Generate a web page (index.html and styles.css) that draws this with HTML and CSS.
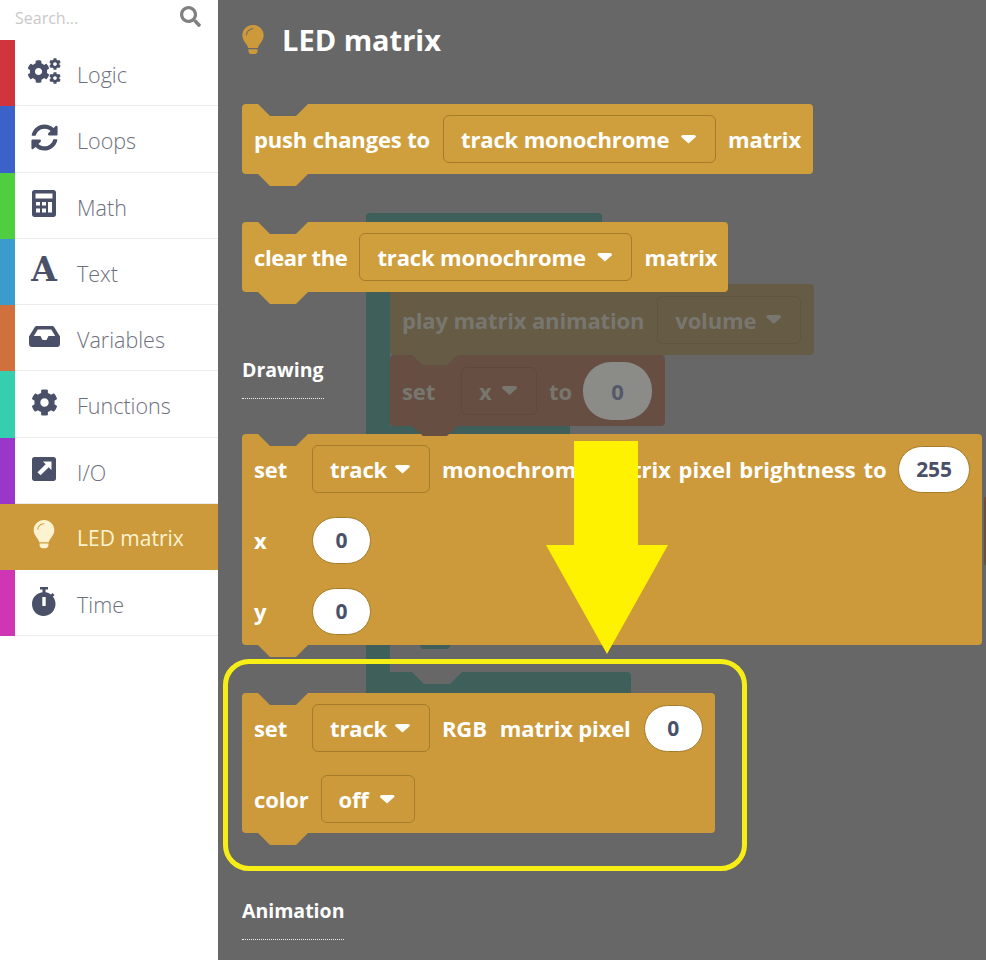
FILE: index.html
```html
<!DOCTYPE html>
<html lang="en">
<head>
  <meta charset="UTF-8">
  <title>LED matrix blocks</title>
  <link rel="stylesheet" href="styles.css">
</head>
<body>

  <svg class="defs" width="0" height="0">
    <symbol id="cog" viewBox="0 0 512 512"><path d="M487.4 315.7l-42.6-24.6c4.3-23.2 4.3-47 0-70.2l42.6-24.6c4.9-2.8 7.1-8.6 5.5-14-11.1-35.6-30-67.8-54.7-94.6-3.8-4.1-10-5.1-14.8-2.3L380.8 110c-17.9-15.4-38.5-27.3-60.8-35.1V25.8c0-5.6-3.9-10.5-9.4-11.7-36.7-8.2-74.3-7.8-109.2 0-5.5 1.2-9.4 6.1-9.4 11.7V75c-22.2 7.9-42.8 19.8-60.8 35.1L88.7 85.5c-4.9-2.8-11-1.9-14.8 2.3-24.7 26.7-43.6 58.9-54.7 94.6-1.7 5.4.6 11.2 5.5 14L67.3 221c-4.3 23.2-4.3 47 0 70.2l-42.6 24.6c-4.9 2.8-7.1 8.6-5.5 14 11.1 35.6 30 67.8 54.7 94.6 3.8 4.1 10 5.1 14.8 2.3l42.6-24.6c17.9 15.4 38.5 27.3 60.8 35.1v49.2c0 5.6 3.9 10.5 9.4 11.7 36.7 8.2 74.3 7.8 109.2 0 5.5-1.2 9.4-6.1 9.4-11.7v-49.2c22.2-7.9 42.8-19.8 60.8-35.1l42.6 24.6c4.9 2.8 11 1.9 14.8-2.3 24.7-26.7 43.6-58.9 54.7-94.6 1.5-5.5-.7-11.3-5.6-14.1zM256 336c-44.1 0-80-35.9-80-80s35.9-80 80-80 80 35.9 80 80-35.9 80-80 80z"/></symbol>
    <symbol id="bulb" viewBox="0 0 22 32"><path fill-rule="evenodd" d="M11 0C5 0 0 4.700 0 10.700c0 2.900 1.100 5.300 2.800 7.300 1.200 1.400 2.700 3.700 3.200 5.700h10c.5-2 2-4.300 3.200-5.700 1.700-2 2.800-4.400 2.800-7.300C22 4.700 17 0 11 0zm0 3.400c-3.900 0-7 3.100-7 6.900 0 .6.900.6.900 0 0-3.300 2.800-5.900 6.100-5.900.7 0 .7-1 0-1z"/><path d="M6.300 25h9.400v2.300c0 .5-.2.900-.5 1.200l-1 1.100c-.3.300-.7.400-1 .4H8.800c-.4 0-.7-.1-1-.4l-1-1.100c-.3-.3-.5-.7-.5-1.200z"/></symbol>
  </svg>

  <div class="app">
    <aside class="sidebar">
      <div class="search">
        <span>Search...</span>
        <svg class="search-icon" viewBox="0 0 512 512"><path d="M505 442.700L405.300 343c-4.500-4.500-10.600-7-17-7H372c27.600-35.300 44-79.700 44-128C416 93.100 322.900 0 208 0S0 93.100 0 208s93.100 208 208 208c48.300 0 92.700-16.400 128-44v16.300c0 6.400 2.500 12.500 7 17l99.700 99.700c9.400 9.400 24.600 9.400 33.900 0l28.300-28.300c9.400-9.400 9.400-24.600.1-34zM208 336c-70.700 0-128-57.200-128-128 0-70.700 57.200-128 128-128 70.700 0 128 57.200 128 128 0 70.700-57.200 128-128 128z"/></svg>
      </div>

      <div class="cat logic">
        <div class="cat-icon">
          <svg width="34" height="26" viewBox="0 0 34 26">
            <use href="#cog" x="0" y="2" width="23" height="23"/>
            <use href="#cog" x="22" y="0" width="12" height="12"/>
            <use href="#cog" x="22" y="14" width="12" height="12"/>
          </svg>
        </div>
        <span>Logic</span>
      </div>
      <div class="cat loops">
        <div class="cat-icon">
          <svg width="27" height="27" viewBox="0 0 512 512"><path d="M370.720 133.280C339.458 104.008 298.888 87.962 255.848 88c-77.458.068-144.328 53.178-162.791 126.850-1.344 5.363-6.122 9.150-11.651 9.150H24.103c-7.498 0-13.194-6.807-11.807-14.176C33.933 94.924 134.813 8 256 8c66.448 0 126.791 26.136 171.315 68.685L463.030 40.970C478.149 25.851 504 36.559 504 57.941V192c0 13.255-10.745 24-24 24H345.941c-21.382 0-32.090-25.851-16.971-40.971l41.750-41.749zM32 296h134.059c21.382 0 32.090 25.851 16.971 40.971l-41.750 41.750c31.262 29.273 71.835 45.319 114.876 45.280 77.418-.07 144.315-53.144 162.787-126.849 1.344-5.363 6.122-9.150 11.651-9.150h57.304c7.498 0 13.194 6.807 11.807 14.176C478.067 417.076 377.187 504 256 504c-66.448 0-126.791-26.136-171.315-68.685L48.970 471.030C33.851 486.149 8 475.441 8 454.059V320c0-13.255 10.745-24 24-24z"/></svg>
        </div>
        <span>Loops</span>
      </div>
      <div class="cat math">
        <div class="cat-icon">
          <svg width="24" height="27" viewBox="0 0 24 27"><path fill-rule="evenodd" d="M2.500 0h19C23 0 24 1 24 2.500v22c0 1.500-1 2.500-2.500 2.500h-19C1 27 0 26 0 24.500v-22C0 1 1 0 2.500 0zM3.500 3.500v5h17v-5zM4 12v3.500h4V12zm6 0v3.500h4V12zm6 0v10.500h4V12zM4 18.500V22.500h4v-4zm6 0V22.500h4v-4z"/></svg>
        </div>
        <span>Math</span>
      </div>
      <div class="cat text">
        <div class="cat-icon"><b class="letter">A</b></div>
        <span>Text</span>
      </div>
      <div class="cat variables">
        <div class="cat-icon">
          <svg width="31" height="21" viewBox="0 0 31 21"><path fill-rule="evenodd" d="M8 0h15c1 0 1.800.5 2.300 1.300L31 10.500V18c0 1.700-1.300 3-3 3H3c-1.700 0-3-1.300-3-3v-7.500L5.700 1.300C6.200.5 7 0 8 0zm.8 3.500L4.800 10h6.700l2 4h4l2-4h6.700l-4-6.500z"/></svg>
        </div>
        <span>Variables</span>
      </div>
      <div class="cat functions">
        <div class="cat-icon"><svg width="27" height="27"><use href="#cog" width="27" height="27"/></svg></div>
        <span>Functions</span>
      </div>
      <div class="cat io">
        <div class="cat-icon">
          <svg width="24" height="24" viewBox="0 0 24 24"><path fill-rule="evenodd" d="M2.500 0h19C23 0 24 1 24 2.500v19c0 1.500-1 2.500-2.500 2.500h-19C1 24 0 23 0 21.500v-19C0 1 1 0 2.500 0zM11 4.500l2.700 2.700-8.200 8 3.100 3.100 8.100-8.100 2.800 2.800V4.500z"/></svg>
        </div>
        <span>I/O</span>
      </div>
      <div class="cat led active">
        <div class="cat-icon"><svg width="22" height="30"><use href="#bulb" width="22" height="30"/></svg></div>
        <span>LED matrix</span>
      </div>
      <div class="cat time">
        <div class="cat-icon">
          <svg width="24" height="29" viewBox="0 0 24 29"><path fill-rule="evenodd" d="M8 0h8v2.500h-2.500v2.700c2.100.3 4 1.100 5.500 2.400l1.500-1.500 2 2-1.600 1.600c1.700 2 2.600 4.500 2.600 7.300 0 6.500-5.300 12-12 12S0 23.500 0 17 4.700 5.800 10.500 5.200V2.500H8zM10.300 10v9h3.400v-9z"/></svg>
        </div>
        <span>Time</span>
      </div>
    </aside>

    <main class="flyout">
      <!-- workspace blocks showing through behind the flyout -->
      <div class="ghosts">
        <div class="ghost teal-top"></div>
        <div class="ghost teal-stem"></div>
        <div class="ghost teal-tab top-tab"></div>
        <div class="ghost teal-tab low-tab"></div>
        <div class="ghost teal-mid"></div>
        <div class="ghost teal-foot"><i class="foot-notch"></i></div>
        <div class="ghost play-block">
          <span class="ghost-label">play matrix animation</span>
          <span class="ghost-drop">volume <i class="caret"></i></span>
        </div>
        <div class="ghost set-block">
          <span class="ghost-label">set</span>
          <span class="ghost-drop small">x <i class="caret"></i></span>
          <span class="ghost-label">to</span>
          <span class="ghost-pill">0</span>
        </div>
        <div class="ghost far-right"></div>
      </div>

      <div class="content">
        <h1 class="title">
          <svg width="22" height="31"><use href="#bulb" width="22" height="31"/></svg>
          LED matrix
        </h1>

        <div class="block b-push">
          <div class="row">
            <span class="push-lbl">push changes to</span>
            <span class="drop track-mono">track monochrome <i class="caret"></i></span>
            <span>matrix</span>
          </div>
        </div>

        <div class="block b-clear">
          <div class="row">
            <span class="clear-lbl">clear the</span>
            <span class="drop track-mono">track monochrome <i class="caret"></i></span>
            <span>matrix</span>
          </div>
        </div>

        <h2 class="section">Drawing</h2>

        <div class="block b-mono">
          <div class="row">
            <span class="lbl">set</span>
            <span class="drop track">track <i class="caret"></i></span>
            <span class="long">monochrome matrix pixel brightness to</span>
            <span class="pill wide">255</span>
          </div>
          <div class="row">
            <span class="lbl">x</span>
            <span class="pill">0</span>
          </div>
          <div class="row">
            <span class="lbl">y</span>
            <span class="pill">0</span>
          </div>
        </div>

        <div class="block b-rgb">
          <div class="row">
            <span class="lbl">set</span>
            <span class="drop track">track <i class="caret"></i></span>
            <span class="rgb">RGB</span>
            <span class="pixel-lbl">matrix pixel</span>
            <span class="pill">0</span>
          </div>
          <div class="row">
            <span>color</span>
            <span class="drop off">off <i class="caret"></i></span>
          </div>
        </div>

        <h2 class="section">Animation</h2>
      </div>

      <div class="highlight"></div>
      <svg class="arrow" width="122" height="213" viewBox="0 0 122 213">
        <polygon points="28,0 92,0 92,104 122,104 61,213 0,104 28,104"/>
      </svg>
    </main>
  </div>

</body>
</html>
```

FILE: styles.css
```css
* {
  box-sizing: border-box;
}

html, body {
  margin: 0;
  height: 960px;
  overflow: hidden;
}

body {
  font-family: 'Open Sans', 'Noto Sans', sans-serif;
  background: #fff;
}

.defs {
  position: absolute;
}

.app {
  display: flex;
  width: 986px;
  height: 960px;
}

/* sidebar */
.sidebar {
  width: 218px;
  flex: none;
  background: #fff;
}

.search {
  height: 40px;
  display: flex;
  align-items: center;
  justify-content: space-between;
  padding: 0 17px 4px 15px;
  font-size: 16px;
  color: #c9c9c9;
}

.search-icon {
  width: 21px;
  height: 21px;
  fill: #808080;
  margin-top: -4px;
}

.cat {
  height: 66.25px;
  display: flex;
  align-items: center;
  border-left: 15px solid #999;
  font-size: 21.5px;
  font-weight: 300;
  color: #6d6f7e;
  position: relative;
}

.cat::after {
  content: "";
  position: absolute;
  left: 0;
  right: 0;
  bottom: 0;
  height: 1px;
  background: #ececec;
}

.cat-icon {
  width: 58px;
  margin-right: 4px;
  display: flex;
  justify-content: center;
  align-items: center;
  fill: #4b5069;
  color: #4b5069;
  margin-top: -4px;
}

.letter {
  font-family: 'DejaVu Serif', serif;
  font-size: 33px;
  font-weight: 700;
  line-height: 30px;
}

.cat > span {
  margin-top: 3px;
}

.logic { border-left-color: #d0343c; }
.loops { border-left-color: #3a62c8; }
.math { border-left-color: #4fcf3f; }
.text { border-left-color: #3a9ccc; }
.variables { border-left-color: #d0703c; }
.functions { border-left-color: #35cfb0; }
.io { border-left-color: #9a36c8; }
.led { border-left-color: #cc9a3a; }
.time { border-left-color: #cf36b4; }

.cat.active {
  background: #cc9a3a;
  color: #fdf3d0;
  fill: #fdf3d0;
  font-size: 21px;
  font-weight: 400;
}

.cat.active::after {
  display: none;
}

.cat.active .cat-icon {
  fill: #fdf3d0;
}

/* flyout */
.flyout {
  flex: 1;
  position: relative;
  overflow: hidden;
  background: #676767;
}

.content {
  position: relative;
  padding: 24px 0 0 24px;
}

.title {
  margin: 0 0 48px;
  height: 32px;
  display: flex;
  align-items: center;
  gap: 18px;
  font-size: 29px;
  font-weight: 700;
  line-height: 32px;
  color: #fff;
  fill: #cc9a3a;
}

.section {
  display: table;
  margin: 64px 0 35px;
  padding-bottom: 14px;
  height: 42px;
  font-size: 19.5px;
  font-weight: 700;
  line-height: 28px;
  color: #fff;
  border-bottom: 1px dotted #eee;
}

.block {
  position: relative;
  margin-bottom: 48px;
  padding: 11px 12px 0;
  background: #cc9a3a;
  border-radius: 4px;
  color: #fff;
  font-size: 22px;
  font-weight: 700;
  line-height: 28px;
  letter-spacing: -0.15px;
}

.block::before,
.block::after {
  content: "";
  position: absolute;
  left: 16px;
  width: 50px;
  height: 12px;
  clip-path: polygon(0 0, 100% 0, 76% 100%, 24% 100%);
}

.block::before {
  top: 0;
  background: #676767;
}

.block::after {
  top: 100%;
  background: #cc9a3a;
}

.row {
  display: flex;
  align-items: center;
  gap: 12px;
  height: 48px;
  margin-bottom: 23px;
  white-space: nowrap;
}

.b-push { width: 571px; height: 70px; background: #cf9f3e; }
.b-clear { width: 486px; height: 70px; background: #cf9f3e; }
.b-push::after, .b-clear::after { background: #cf9f3e; }
.b-mono { width: 740px; height: 211px; }
.b-rgb { width: 473px; height: 140px; margin-bottom: 0; }

.lbl {
  width: 46px;
}

.push-lbl {
  width: 178px;
}

.clear-lbl {
  width: 94px;
  letter-spacing: -0.4px;
}

.pixel-lbl {
  width: 132px;
}

.drop {
  flex: none;
  height: 48px;
  display: flex;
  align-items: center;
  justify-content: space-between;
  padding: 0 19px 0 17px;
  border: 1px solid #a67b2a;
  border-radius: 6px;
}

.track-mono { width: 273px; }
.track { width: 118px; }
.off { width: 94px; }

.caret {
  width: 15px;
  height: 9px;
  background: currentColor;
  clip-path: polygon(0 0, 100% 0, 100% 25%, 50% 100%, 0 25%);
  border-radius: 2px;
}

.long {
  width: 444px;
  letter-spacing: 0;
  word-spacing: 2px;
}

.rgb {
  margin-right: 1px;
}

.pill {
  flex: none;
  width: 59px;
  height: 47px;
  display: flex;
  align-items: center;
  justify-content: center;
  background: #fff;
  border: 1px solid #a67b2a;
  border-radius: 24px;
  color: #4b5069;
  font-size: 21px;
}

.pill.wide {
  width: 72px;
}

/* ghost workspace */
.ghosts {
  position: absolute;
  inset: 0;
}

.ghost {
  position: absolute;
  display: flex;
  align-items: center;
  gap: 12px;
  border-radius: 4px;
  font-size: 22px;
  font-weight: 700;
  letter-spacing: -0.15px;
  color: #78776f;
  white-space: nowrap;
}

.teal-top { left: 148px; top: 213px; width: 236px; height: 40px; background: #3f5f5a; }
.teal-stem { left: 148px; top: 250px; width: 24px; height: 440px; background: #3f5f5a; }
.teal-mid { left: 172px; top: 424px; width: 180px; height: 12px; background: #3f5f5a; }
.teal-foot { left: 148px; top: 672px; width: 265px; height: 24px; background: #3f5f5a; }

.teal-tab {
  width: 30px;
  height: 8px;
  background: #3f5f5a;
}

.top-tab { left: 202px; top: 289px; }
.low-tab { left: 202px; top: 641px; }

.foot-notch {
  position: absolute;
  left: 46px;
  top: 0;
  width: 50px;
  height: 12px;
  background: #676767;
  clip-path: polygon(0 0, 100% 0, 76% 100%, 24% 100%);
}

.play-block {
  left: 172px;
  top: 284px;
  width: 424px;
  height: 71px;
  padding-left: 12px;
  background: #665b45;
}

.set-block {
  left: 172px;
  top: 355px;
  width: 275px;
  height: 71px;
  padding-left: 12px;
  background: #664e42;
}

.play-block::after,
.set-block::after {
  content: "";
  position: absolute;
  left: 22px;
  top: 100%;
  width: 46px;
  height: 10px;
  clip-path: polygon(0 0, 100% 0, 76% 100%, 24% 100%);
  z-index: 1;
}

.play-block::after { background: #665b45; }
.set-block::after { background: #664e42; }

.ghost-drop {
  flex: none;
  width: 144px;
  height: 48px;
  margin-left: 1px;
  display: flex;
  align-items: center;
  justify-content: space-between;
  padding: 0 19px 0 17px;
  border: 1px solid #5f5540;
  border-radius: 6px;
}

.set-block .ghost-drop {
  border-color: #5f483d;
}

.ghost-drop.small {
  width: 76px;
  margin-left: 14px;
}

.ghost-pill {
  width: 69px;
  height: 58px;
  margin-left: -1px;
  display: flex;
  align-items: center;
  justify-content: center;
  background: #8b8b88;
  border-radius: 28px;
  color: #55586a;
}

.far-right {
  left: 766px;
  top: 496px;
  width: 20px;
  height: 70px;
  background: #664e42;
}

/* annotations */
.highlight {
  position: absolute;
  left: 5px;
  top: 659px;
  width: 524px;
  height: 212px;
  border: 5px solid #f7ee16;
  border-radius: 26px;
}

.arrow {
  position: absolute;
  left: 328px;
  top: 441px;
  fill: #fff200;
}
```
